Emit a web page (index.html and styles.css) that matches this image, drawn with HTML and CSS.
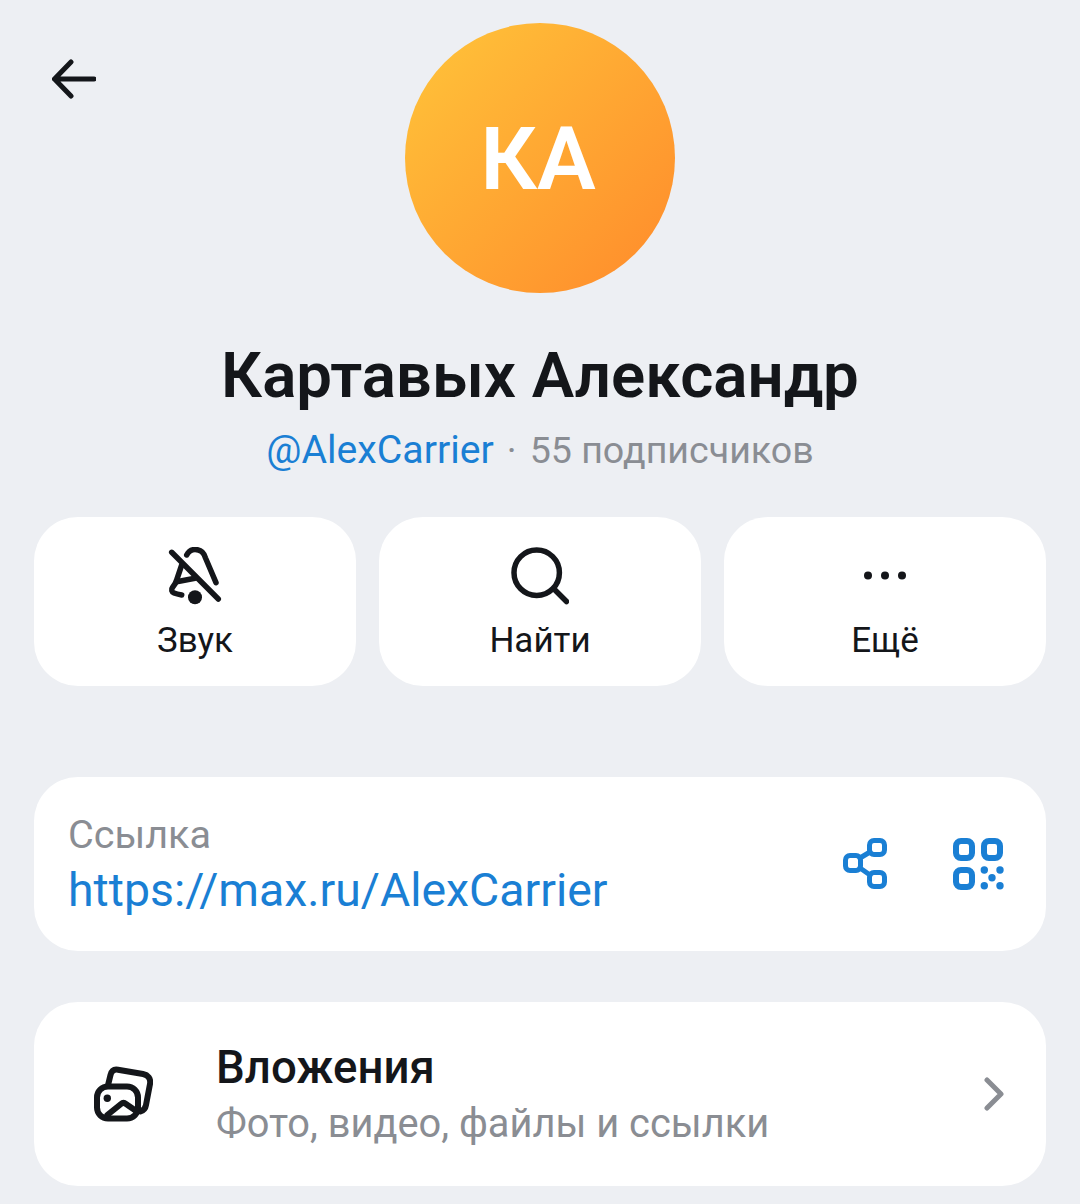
FILE: index.html
```html
<!DOCTYPE html>
<html lang="ru">
<head>
  <meta charset="UTF-8" />
  <meta name="viewport" content="width=device-width, initial-scale=1" />
  <title>Картавых Александр</title>
  <link rel="stylesheet" href="styles.css">
</head>
<body>

<!-- Back -->
<button class="back-btn">
  <svg width="44" height="40" viewBox="0 0 44 40"><path d="M42 20H2.5M19 3 2.5 20 19 37" /></svg>
</button>

<header class="profile">
  <div class="avatar">КА</div>
  <h1>Картавых Александр</h1>
  <p class="meta"><span class="nick">@AlexCarrier</span><span class="dot">·</span>55 подписчиков</p>
</header>

<nav class="actions">
  <button class="action">
    <svg class="search" width="54" height="58" viewBox="0 0 54 58">
      <path d="M3.7 5.3 50.3 52" />
      <path d="M18.7 8C21 3.5 24 2.5 27 2.5 32 2.5 36 5.5 37.5 11L48 35.7" />
      <path d="M13.7 18 9 32C8 36 6.5 38 4.5 40.5 3 42.5 3.5 45 6 46 8.5 47 11 47.5 13.7 48" />
      <path d="M8.7 34.7 27 31.3" />
      <circle class="fill" cx="27" cy="50.3" r="7" />
    </svg>
    <span>Звук</span>
  </button>
  <button class="action">
    <svg class="search" width="58" height="58" viewBox="0 0 58 58">
      <circle cx="25.7" cy="25.7" r="22.7" />
      <path d="M44 43 55.5 54.5" />
    </svg>
    <span>Найти</span>
  </button>
  <button class="action">
    <svg width="44" height="58" viewBox="0 0 44 58">
      <circle class="fill" cx="5" cy="28.5" r="4" />
      <circle class="fill" cx="22" cy="28.5" r="4" />
      <circle class="fill" cx="39" cy="28.5" r="4" />
    </svg>
    <span>Ещё</span>
  </button>
</nav>

<section class="card link-card">
  <div class="link-text">
    <div class="label">Ссылка</div>
    <a class="link">https://max.ru/AlexCarrier</a>
  </div>
  <div class="link-icons">
    <svg class="share" width="46" height="52" viewBox="0 0 46 52">
      <rect x="2.5" y="17.5" width="15" height="15" rx="4.5" />
      <rect x="26.5" y="2.5" width="15" height="14" rx="4.5" />
      <rect x="26.5" y="34.5" width="15" height="14" rx="4.5" />
      <path d="M17 20 27 14M17 30 27 37" />
    </svg>
    <svg class="thick" width="52" height="52" viewBox="0 0 52 52">
      <rect x="3" y="3" width="16" height="17" rx="5" />
      <rect x="31" y="3" width="16" height="17" rx="5" />
      <rect x="3" y="32" width="16" height="17" rx="5" />
      <circle class="fill" cx="31.3" cy="32" r="3.7" />
      <circle class="fill" cx="47" cy="32" r="3.7" />
      <circle class="fill" cx="39" cy="39.7" r="3.7" />
      <circle class="fill" cx="31.3" cy="47.7" r="3.7" />
      <circle class="fill" cx="47" cy="47.7" r="3.7" />
    </svg>
  </div>
</section>

<section class="card media-card">
  <svg class="thick" width="60" height="56" viewBox="0 0 60 56">
    <rect x="4" y="20.5" width="41" height="32" rx="11" />
    <path d="M15.3 18 17.5 9C18.5 5 21 3 25 3.7L50 8C55 9 58 12.5 57 18L53 39C52.5 42 50.5 44.5 47.5 45.5" />
    <path d="M14.3 49 28 38C29.5 36.7 31.5 36.7 33 38L44.3 45.7" />
    <circle class="fill" cx="14.3" cy="32.3" r="3.7" />
  </svg>
  <div class="media-text">
    <h4>Вложения</h4>
    <p>Фото, видео, файлы и ссылки</p>
  </div>
  <svg class="chevron" width="20" height="34" viewBox="0 0 20 34"><path d="M3 3 17 17 3 31" /></svg>
</section>

</body>
</html>
```

FILE: styles.css
```css
body {
  font-family: Roboto, "Noto Sans", sans-serif;
  margin: 0;
  background: #edeff3;
  color: #14161a;
  padding: 23px 34px 0;
  position: relative;
}
svg {
  fill: none;
  stroke: currentColor;
  stroke-width: 5;
  stroke-linecap: round;
  stroke-linejoin: round;
  flex-shrink: 0;
}
svg .fill {
  fill: currentColor;
  stroke: none;
}
svg.thick {
  stroke-width: 6;
}
svg.search {
  stroke-width: 5.5;
}
svg.share {
  stroke-width: 5;
}
.back-btn {
  position: absolute;
  top: 59px;
  left: 52px;
  padding: 0;
  border: none;
  background: none;
  color: #14161a;
  line-height: 0;
}
.profile {
  text-align: center;
}
.avatar {
  width: 270px;
  height: 270px;
  margin: 0 auto;
  border-radius: 50%;
  background: linear-gradient(135deg, #ffc53a, #ff8a2b);
  color: white;
  font-size: 88px;
  font-weight: 600;
  display: flex;
  align-items: center;
  justify-content: center;
  padding-right: 4px;
  box-sizing: border-box;
}
.profile h1 {
  margin: 46px 0 0;
  font-size: 63.6px;
  line-height: 74px;
  font-weight: 600;
}
.meta {
  margin: 15px 0 0;
  font-size: 37.6px;
  line-height: 44px;
  color: #8a8d93;
}
.nick {
  font-size: 39.2px;
  color: #1a7fd4;
}
.dot {
  margin: 0 13px;
}
.actions {
  display: flex;
  gap: 23px;
  margin-top: 45px;
}
.action {
  flex: 1;
  height: 169px;
  border: none;
  border-radius: 44px;
  background: white;
  color: #14161a;
  font-family: inherit;
  font-size: 35px;
  padding: 30px 0 0;
  display: flex;
  flex-direction: column;
  align-items: center;
  gap: 15px;
}
.card {
  background: white;
  border-radius: 44px;
  display: flex;
  align-items: center;
}
.link-card {
  height: 174px;
  margin-top: 91px;
  padding: 0 41px 0 34px;
  justify-content: space-between;
}
.link-text {
  padding-top: 4px;
}
.label {
  font-size: 39.6px;
  line-height: 48px;
  color: #8a8d93;
}
.link {
  display: block;
  font-size: 46.4px;
  line-height: 62px;
  color: #1a7fd4;
}
.link-icons {
  display: flex;
  align-items: center;
  gap: 64px;
  color: #1a7fd4;
}
.media-card {
  height: 184px;
  margin-top: 51px;
  padding: 0 42px 0 59px;
}
.media-text {
  flex: 1;
  margin-left: 63px;
  padding-top: 4px;
}
.media-text h4 {
  margin: 0;
  font-size: 45.6px;
  line-height: 56px;
  font-weight: 500;
}
.media-text p {
  margin: 0;
  font-size: 39.8px;
  line-height: 56px;
  color: #8a8d93;
}
.chevron {
  color: #8a8d93;
}
```
